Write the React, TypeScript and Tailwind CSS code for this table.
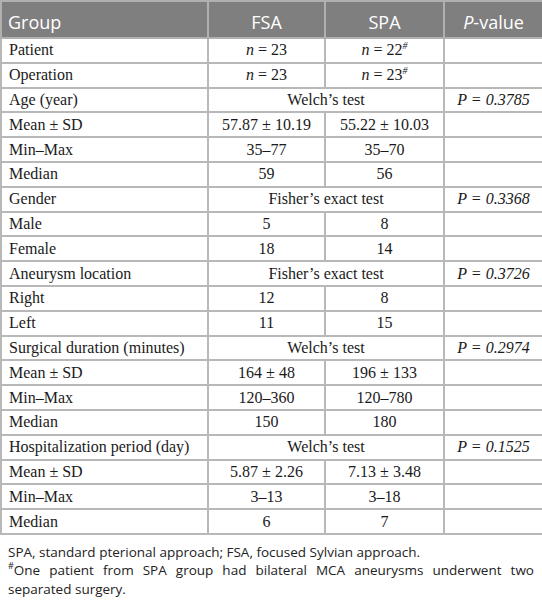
type Row = {
  label: string;
  fsa?: React.ReactNode;
  spa?: React.ReactNode;
  merged?: string;
  p?: string;
};

const n = (v: string, mark?: boolean) => (
  <>
    <i>n</i> = {v}
    {mark && <span className="text-[10px] align-top relative -top-[1px] italic">#</span>}
  </>
);

const rows: Row[] = [
  { label: "Patient", fsa: n("23"), spa: n("22", true) },
  { label: "Operation", fsa: n("23"), spa: n("23", true) },
  { label: "Age (year)", merged: "Welch’s test", p: "0.3785" },
  { label: "Mean ± SD", fsa: "57.87 ± 10.19", spa: "55.22 ± 10.03" },
  { label: "Min–Max", fsa: "35–77", spa: "35–70" },
  { label: "Median", fsa: "59", spa: "56" },
  { label: "Gender", merged: "Fisher’s exact test", p: "0.3368" },
  { label: "Male", fsa: "5", spa: "8" },
  { label: "Female", fsa: "18", spa: "14" },
  { label: "Aneurysm location", merged: "Fisher’s exact test", p: "0.3726" },
  { label: "Right", fsa: "12", spa: "8" },
  { label: "Left", fsa: "11", spa: "15" },
  { label: "Surgical duration (minutes)", merged: "Welch’s test", p: "0.2974" },
  { label: "Mean ± SD", fsa: "164 ± 48", spa: "196 ± 133" },
  { label: "Min–Max", fsa: "120–360", spa: "120–780" },
  { label: "Median", fsa: "150", spa: "180" },
  { label: "Hospitalization period (day)", merged: "Welch’s test", p: "0.1525" },
  { label: "Mean ± SD", fsa: "5.87 ± 2.26", spa: "7.13 ± 3.48" },
  { label: "Min–Max", fsa: "3–13", spa: "3–18" },
  { label: "Median", fsa: "6", spa: "7" },
];

const cell = "border-2 border-[#b8b8b8] h-[24.8px] py-0 leading-none";

export default function App() {
  return (
    <div className="w-[542px] h-[604px] bg-white overflow-hidden">
      <table className="border-collapse table-fixed w-[542px] font-['Liberation_Serif',serif] text-[16px] text-[#1a1a1a]">
        <colgroup>
          <col className="w-[207px]" />
          <col className="w-[117px]" />
          <col className="w-[119px]" />
          <col className="w-[99px]" />
        </colgroup>
        <thead>
          <tr className="bg-[#7f7f7f] text-white font-['Open_Sans',sans-serif] text-[18px]">
            <th className="border-2 border-[#b0b0b0] h-[37px] pl-[6px] pt-[5px] text-left font-normal">Group</th>
            <th className="border-2 border-[#b0b0b0] pt-[5px] font-normal">FSA</th>
            <th className="border-2 border-[#b0b0b0] pt-[5px] font-normal">SPA</th>
            <th className="border-2 border-[#b0b0b0] pt-[5px] font-normal">
              <i>P</i>-value
            </th>
          </tr>
        </thead>
        <tbody>
          {rows.map((r, i) => (
            <tr key={i}>
              <td className={`${cell} pl-[7px] text-left`}>{r.label}</td>
              {r.merged ? (
                <td colSpan={2} className={`${cell} text-center`}>
                  {r.merged}
                </td>
              ) : (
                <>
                  <td className={`${cell} text-center`}>{r.fsa}</td>
                  <td className={`${cell} text-center`}>{r.spa}</td>
                </>
              )}
              <td className={`${cell} text-center italic`}>{r.p ? `P = ${r.p}` : ""}</td>
            </tr>
          ))}
        </tbody>
      </table>
      <div className="mt-[8px] px-[8px] font-['Open_Sans',sans-serif] text-[13.5px] leading-[18.5px] text-[#222] text-justify">
        <p>SPA, standard pterional approach; FSA, focused Sylvian approach.</p>
        <p>
          <span className="text-[9px] align-top leading-none">#</span>One patient from SPA group had bilateral MCA
          aneurysms underwent two separated surgery.
        </p>
      </div>
    </div>
  );
}
